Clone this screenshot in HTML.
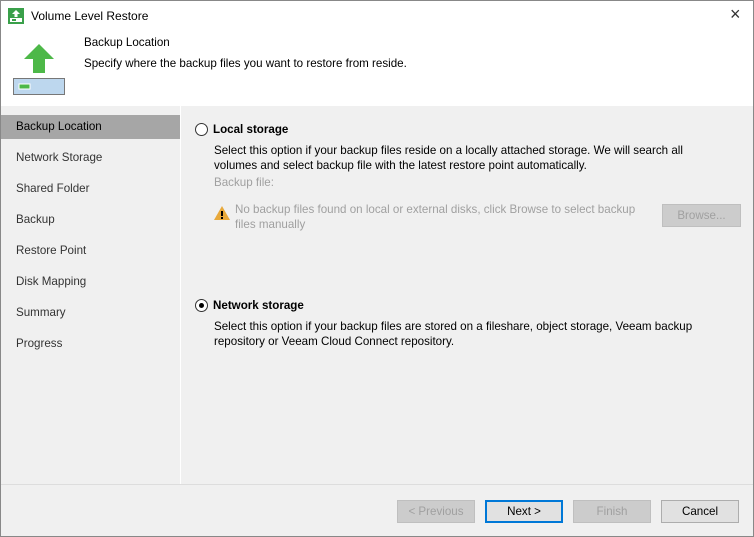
<!DOCTYPE html>
<html><head><style>
*{margin:0;padding:0;box-sizing:border-box}
body{width:754px;height:537px;overflow:hidden;font-family:"Liberation Sans",sans-serif;font-size:11.6px;color:#000;background:#f0f0f0;position:relative}
.win{position:absolute;left:0;top:0;width:754px;height:537px;border:1px solid #888;background:#f0f0f0}
.abs{position:absolute;white-space:nowrap}
.hdr{position:absolute;left:0;top:0;width:752px;height:105px;background:#fff}
.nav{position:absolute;left:0;width:179px;height:24px;padding-left:15px;line-height:24px;color:#333}
.sel{background:#a6a6a6;color:#000}
.btn{position:absolute;top:499px;height:23px;width:78px;border:1px solid #adadad;background:#e1e1e1;text-align:center;line-height:21px}
.dis{color:#a0a0a0;background:#ccc;border-color:#bfbfbf}
.radio{position:absolute;width:13px;height:13px;border:1px solid #333;border-radius:50%;background:#fff}
</style></head><body><div class="win">
<div class="hdr"></div>
<svg class="abs" style="left:7px;top:7px" width="16" height="16"><rect width="16" height="16" fill="#3aa04a"/><rect x="2" y="10" width="12" height="4" fill="#fff"/><rect x="4" y="11" width="4" height="2" fill="#3aa04a"/><path d="M8 2 L12 6 H9.5 V9 H6.5 V6 H4Z" fill="#fff"/></svg>
<div class="abs" style="left:30px;top:8px;font-size:12px">Volume Level Restore</div>
<div class="abs" style="left:729px;top:3px;font-size:18px;color:#333">×</div>
<svg class="abs" style="left:12px;top:40px" width="54" height="56"><path d="M26 3 L41 18 H32 V32 H20 V18 H11Z" fill="#4db848"/><rect x="0.5" y="37.5" width="51" height="16" fill="#bdd7ee" stroke="#777"/><rect x="6" y="43" width="11" height="5" fill="#4db848" stroke="#fff"/></svg>
<div class="abs" style="left:83px;top:35px">Backup Location</div>
<div class="abs" style="left:83px;top:56px">Specify where the backup files you want to restore from reside.</div>
<div class="abs" style="left:179px;top:105px;width:1px;height:378px;background:#fff"></div>
<div class="nav sel" style="top:114px">Backup Location</div>
<div class="nav" style="top:145px">Network Storage</div>
<div class="nav" style="top:176px">Shared Folder</div>
<div class="nav" style="top:207px">Backup</div>
<div class="nav" style="top:238px">Restore Point</div>
<div class="nav" style="top:269px">Disk Mapping</div>
<div class="nav" style="top:300px">Summary</div>
<div class="nav" style="top:331px">Progress</div>
<div class="radio" style="left:194px;top:122px"></div>
<div class="abs" style="left:212px;top:122px;font-weight:bold">Local storage</div>
<div class="abs" style="left:213px;top:142px;line-height:15px">Select this option if your backup files reside on a locally attached storage. We will search all<br>volumes and select backup file with the latest restore point automatically.</div>
<div class="abs" style="left:213px;top:175px;color:#a0a0a0">Backup file:</div>
<svg class="abs" style="left:213px;top:205px" width="16" height="14"><path d="M8 0 L16 14 H0Z" fill="#e8a93b"/><rect x="7" y="5" width="2" height="5" fill="#000"/><rect x="7" y="11" width="2" height="2" fill="#000"/></svg>
<div class="abs" style="left:234px;top:201px;color:#a0a0a0;line-height:15px">No backup files found on local or external disks, click Browse to select backup<br>files manually</div>
<div class="btn dis" style="left:661px;top:203px;width:79px">Browse...</div>
<div class="radio" style="left:194px;top:298px"><div style="position:absolute;left:3px;top:3px;width:5px;height:5px;border-radius:50%;background:#000"></div></div>
<div class="abs" style="left:212px;top:298px;font-weight:bold">Network storage</div>
<div class="abs" style="left:213px;top:318px;line-height:15px">Select this option if your backup files are stored on a fileshare, object storage, Veeam backup<br>repository or Veeam Cloud Connect repository.</div>
<div class="abs" style="left:0;top:483px;width:752px;height:1px;background:#ddd"></div>
<div class="btn dis" style="left:396px">&lt; Previous</div>
<div class="btn" style="left:484px;border:2px solid #0078d7;line-height:19px">Next &gt;</div>
<div class="btn dis" style="left:572px">Finish</div>
<div class="btn" style="left:660px">Cancel</div>
</div></body></html>
